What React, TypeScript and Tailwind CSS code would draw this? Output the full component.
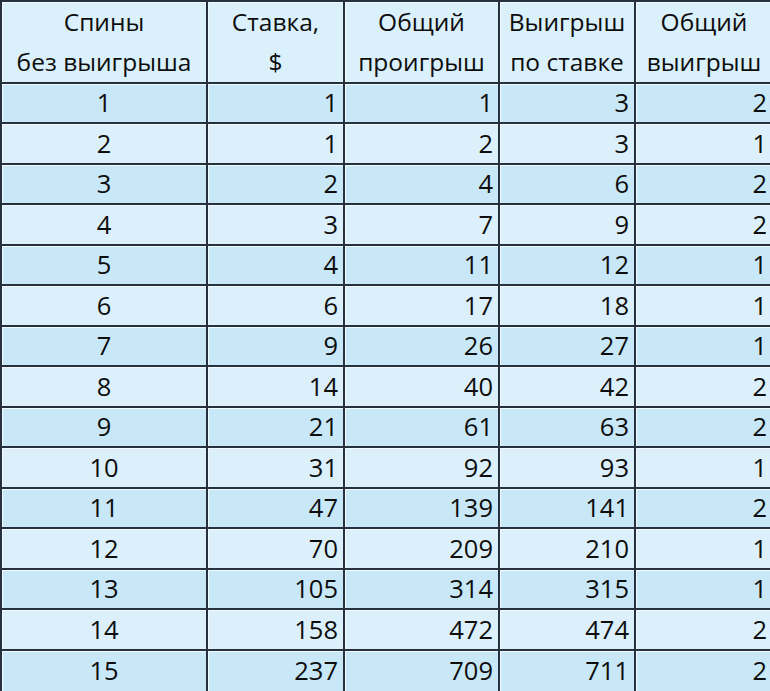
const headers = [
  ["Спины", "без выигрыша"],
  ["Ставка,", "$"],
  ["Общий", "проигрыш"],
  ["Выигрыш", "по ставке"],
  ["Общий", "выигрыш"],
];

const rows = [
  [1, 1, 1, 3, 2],
  [2, 1, 2, 3, 1],
  [3, 2, 4, 6, 2],
  [4, 3, 7, 9, 2],
  [5, 4, 11, 12, 1],
  [6, 6, 17, 18, 1],
  [7, 9, 26, 27, 1],
  [8, 14, 40, 42, 2],
  [9, 21, 61, 63, 2],
  [10, 31, 92, 93, 1],
  [11, 47, 139, 141, 2],
  [12, 70, 209, 210, 1],
  [13, 105, 314, 315, 1],
  [14, 158, 472, 474, 2],
  [15, 237, 709, 711, 2],
];

export default function App() {
  return (
    <div
      className="w-[770px] h-[691px] grid grid-cols-[206px_137px_155px_136px_136px] grid-rows-[82px_repeat(15,1fr)] border-t-2 border-l-2 border-[#26313d] text-[#0d0d0d] overflow-hidden"
      style={{ fontFamily: '"Open Sans", "Noto Sans", sans-serif' }}
    >
      {headers.map((h, i) => (
        <div
          key={i}
          className={`flex flex-col items-center justify-center text-[24.5px] leading-[40px] bg-[#daf0fb] border-b-2 border-[#26313d] shadow-[inset_1px_1px_0_#f2fbff] ${i < 4 ? "border-r-2" : ""}`}
        >
          <span>{h[0]}</span>
          <span>{h[1]}</span>
        </div>
      ))}
      {rows.map((r, ri) =>
        r.map((v, ci) => (
          <div
            key={`${ri}-${ci}`}
            className={`flex items-center text-[25.5px] leading-none border-[#26313d] shadow-[inset_1px_1px_0_#f2fbff] ${
              ri % 2 === 0 ? "bg-[#c8e8f8]" : "bg-[#dbf0fb]"
            } ${ci === 0 ? "justify-center" : "justify-end pr-[5px]"} ${ci < 4 ? "border-r-2" : ""} ${
              ri < 14 ? "border-b-2" : ""
            }`}
          >
            {v}
          </div>
        ))
      )}
    </div>
  );
}
